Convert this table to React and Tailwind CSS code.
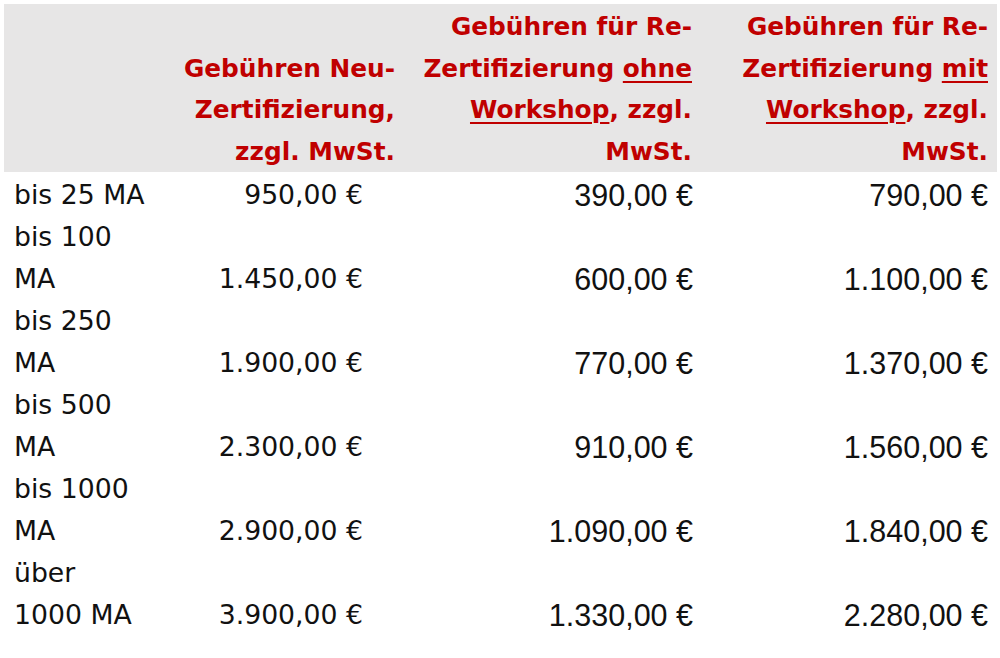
import React from "react";

const rows = [
  { label: ["bis 25 MA"], v: ["950,00 €", "390,00 €", "790,00 €"] },
  { label: ["bis 100", "MA"], v: ["1.450,00 €", "600,00 €", "1.100,00 €"] },
  { label: ["bis 250", "MA"], v: ["1.900,00 €", "770,00 €", "1.370,00 €"] },
  { label: ["bis 500", "MA"], v: ["2.300,00 €", "910,00 €", "1.560,00 €"] },
  { label: ["bis 1000", "MA"], v: ["2.900,00 €", "1.090,00 €", "1.840,00 €"] },
  { label: ["über", "1000 MA"], v: ["3.900,00 €", "1.330,00 €", "2.280,00 €"] },
];

const head = "font-['DejaVu_Sans',sans-serif] font-bold text-[24.8px] leading-[41.5px] text-[#c00000] whitespace-nowrap";
const u = "underline decoration-[2px] underline-offset-[4px]";
const plex = "font-['DejaVu_Sans',sans-serif] text-[26.7px] leading-[42px] text-[#111111] whitespace-nowrap";
const arial = "font-['Liberation_Sans',Arial,sans-serif] text-[30.5px] leading-[42px] text-[#111111] whitespace-nowrap";

export default function App() {
  return (
    <div className="w-[1000px] h-[658px] bg-white overflow-hidden pt-[4px] pl-[4px]">
      <div className="w-[993px] grid grid-cols-[146px_250px_297px_296px] bg-[#e7e6e6] pt-[2px] h-[168px]">
        <div />
        <div className={`${head} flex flex-col justify-end items-end pr-[5px]`}>
          <div>Gebühren Neu-</div>
          <div>Zertifizierung,</div>
          <div>zzgl. MwSt.</div>
        </div>
        <div className={`${head} flex flex-col items-end pr-[5px]`}>
          <div>Gebühren für Re-</div>
          <div>Zertifizierung <span className={u}>ohne</span></div>
          <div><span className={u}>Workshop</span>, zzgl.</div>
          <div>MwSt.</div>
        </div>
        <div className={`${head} flex flex-col items-end pr-[5px]`}>
          <div>Gebühren für Re-</div>
          <div>Zertifizierung <span className={u}>mit</span></div>
          <div><span className={u}>Workshop</span>, zzgl.</div>
          <div>MwSt.</div>
        </div>
      </div>
      <div className="pt-[2px] w-[993px]">
        {rows.map((r, i) => (
          <div key={i} className="grid grid-cols-[146px_250px_297px_296px] items-end">
            <div className={`${plex} pl-[10px]`}>
              {r.label.map((l, j) => (
                <div key={j}>{l}</div>
              ))}
            </div>
            <div className={`${plex} text-right pr-[37px]`}>{r.v[0]}</div>
            <div className={`${arial} text-right pr-[4px]`}>{r.v[1]}</div>
            <div className={`${arial} text-right pr-[5px]`}>{r.v[2]}</div>
          </div>
        ))}
      </div>
    </div>
  );
}
